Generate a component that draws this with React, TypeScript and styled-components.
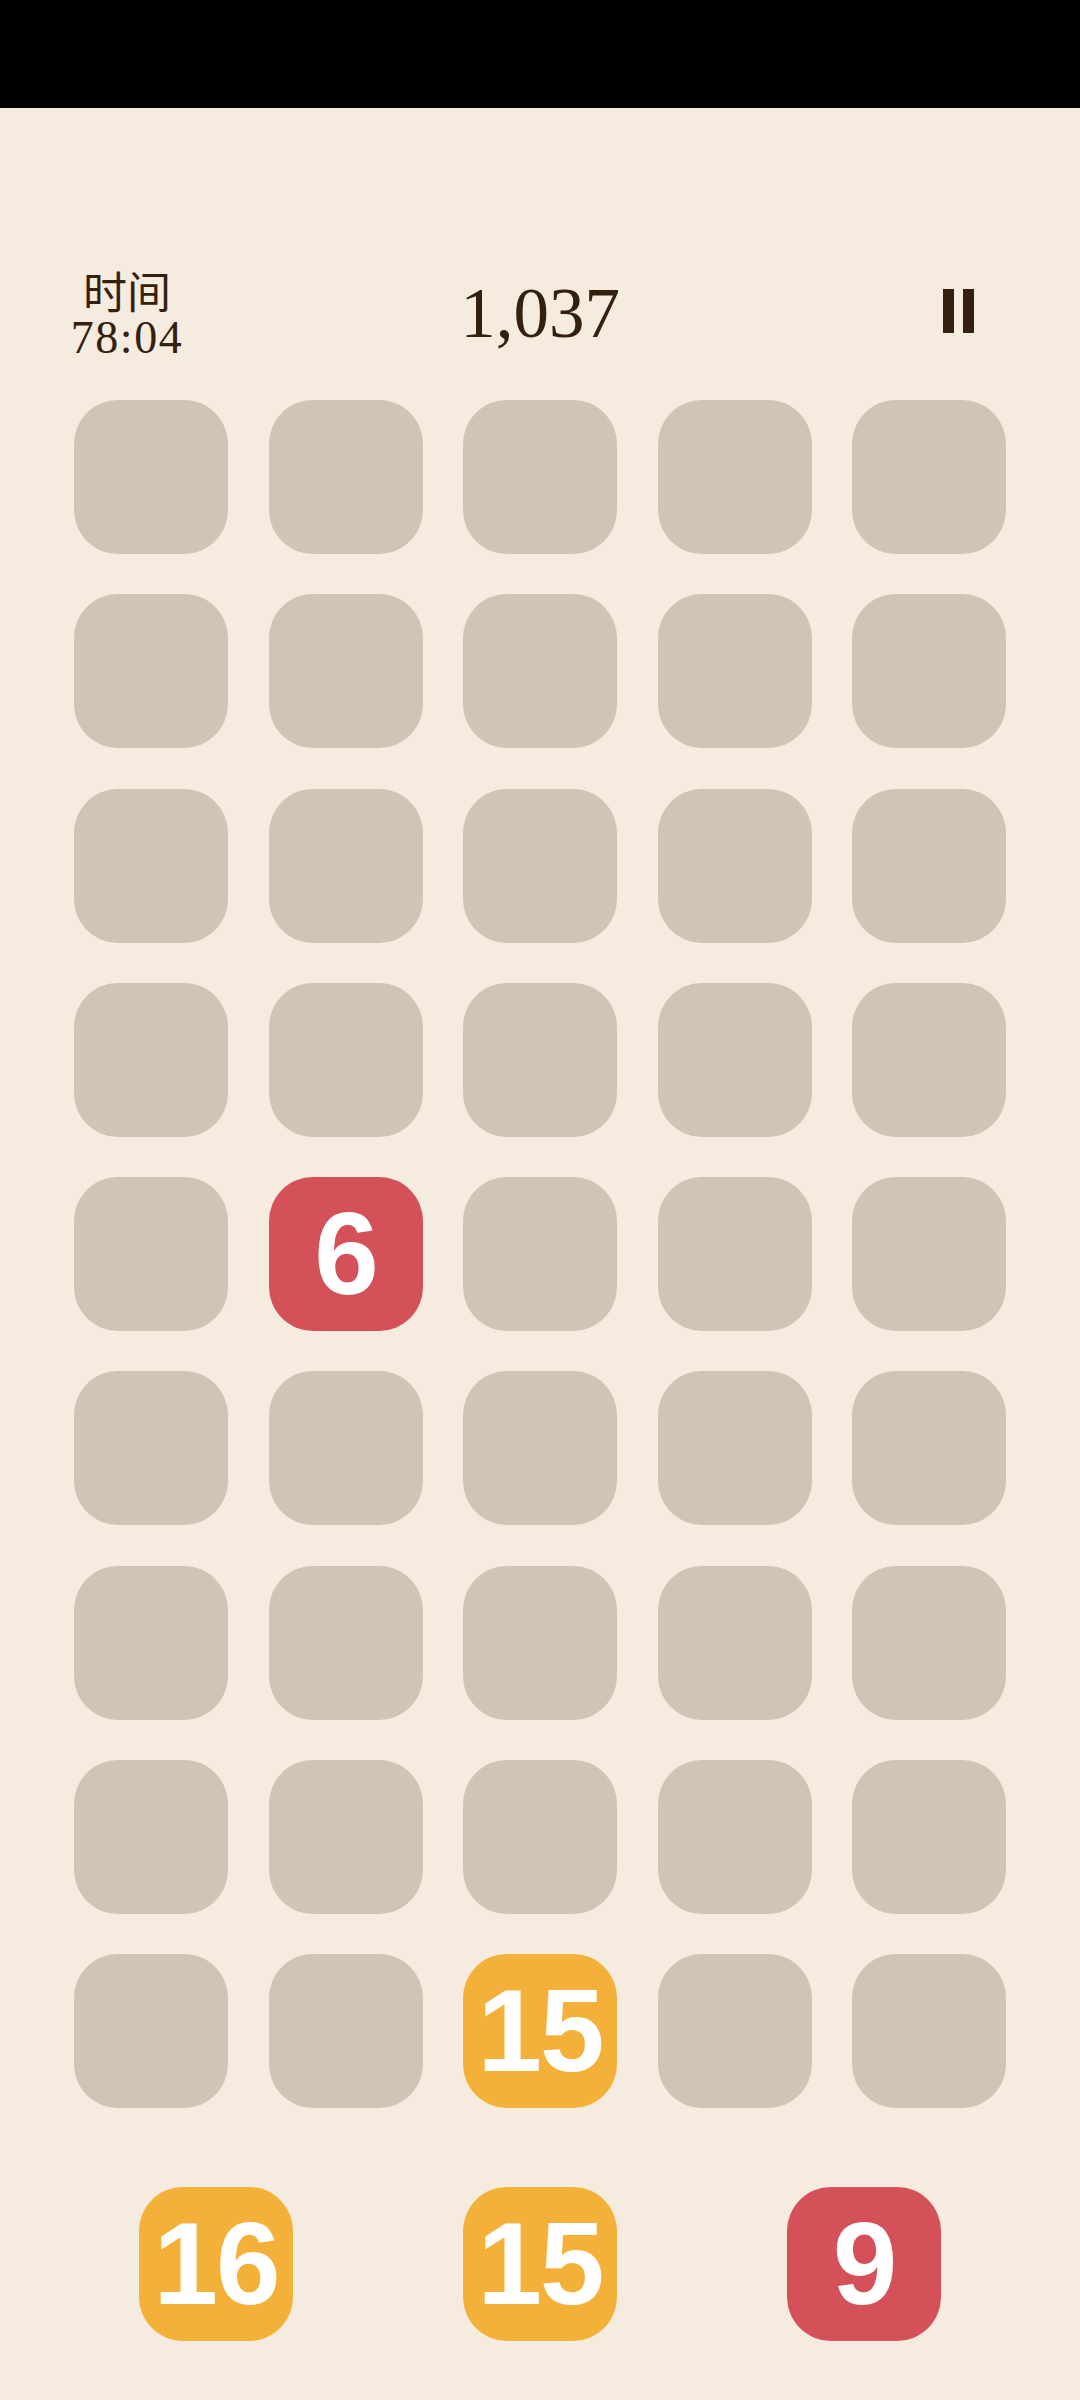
import React from 'react';
import styled, { createGlobalStyle } from 'styled-components';

type TileColor = 'empty' | 'red' | 'orange';

interface Cell {
  value?: number;
  color: TileColor;
}

const COLORS: Record<TileColor, string> = {
  empty: '#d1c3b5',
  red: '#d4515a',
  orange: '#f4b13a',
};

const ROWS = 9;
const COLS = 5;

const filled: Record<string, Cell> = {
  '4-1': { value: 6, color: 'red' },
  '8-2': { value: 15, color: 'orange' },
};

const board: Cell[] = Array.from({ length: ROWS * COLS }, (_, i) => {
  const key = `${Math.floor(i / COLS)}-${i % COLS}`;
  return filled[key] ?? { color: 'empty' };
});

const queue: Cell[] = [
  { value: 16, color: 'orange' },
  { value: 15, color: 'orange' },
  { value: 9, color: 'red' },
];

const GlobalStyle = createGlobalStyle`
  html, body {
    margin: 0;
    padding: 0;
    background: #f5ebde;
  }
`;

export default function App() {
  return (
    <>
      <GlobalStyle />
      <Page>
        <StatusBar />
        <Header>
          <TimeBlock>
            <TimeLabel>时间</TimeLabel>
            <TimeValue>78:04</TimeValue>
          </TimeBlock>
          <Score>1,037</Score>
          <PauseButton aria-label="暂停">
            <PauseBar />
            <PauseBar />
          </PauseButton>
        </Header>

        <Board>
          {board.map((cell, i) => (
            <Tile key={i} $color={cell.color}>
              {cell.value}
            </Tile>
          ))}
        </Board>

        <Queue>
          {queue.map((cell, i) => (
            <Tile key={i} $color={cell.color}>
              {cell.value}
            </Tile>
          ))}
        </Queue>
      </Page>
    </>
  );
}

const Page = styled.div`
  width: 1080px;
  height: 2400px;
  background: #f5ebde;
  display: flex;
  flex-direction: column;
  align-items: center;
  color: #33200f;
`;

const StatusBar = styled.div`
  width: 100%;
  height: 108px;
  background: #000;
  flex-shrink: 0;
`;

const Header = styled.header`
  width: 100%;
  box-sizing: border-box;
  height: 120px;
  margin-top: 145px;
  padding: 0 70px;
  display: grid;
  grid-template-columns: 1fr auto 1fr;
  align-items: center;
`;

const TimeBlock = styled.div`
  justify-self: start;
  width: 114px;
  display: flex;
  flex-direction: column;
  align-items: center;
`;

const TimeLabel = styled.div`
  font-family: 'Noto Sans CJK SC', sans-serif;
  font-size: 44px;
  line-height: 49px;
`;

const TimeValue = styled.div`
  font-family: 'Liberation Serif', serif;
  font-size: 46px;
  line-height: 46px;
  letter-spacing: 1.5px;
`;

const Score = styled.div`
  font-family: 'Liberation Serif', serif;
  font-size: 71px;
  line-height: 1;
`;

const PauseButton = styled.div`
  justify-self: end;
  margin-right: 36px;
  margin-bottom: 4px;
  display: flex;
  gap: 9px;
`;

const PauseBar = styled.span`
  width: 11px;
  height: 44px;
  background: #33200f;
`;

const Board = styled.div`
  margin-top: 27px;
  display: grid;
  grid-template-columns: repeat(5, 154px);
  grid-auto-rows: 154px;
  column-gap: 40.5px;
  row-gap: 40.25px;
`;

const Queue = styled.div`
  margin-top: 79px;
  display: flex;
  justify-content: center;
  gap: 170px;
`;

const Tile = styled.div<{ $color: TileColor }>`
  width: 154px;
  height: 154px;
  border-radius: 44px;
  background: ${({ $color }) => COLORS[$color]};
  display: flex;
  align-items: center;
  justify-content: center;
  color: #fff;
  font-family: 'Liberation Sans', Arial, sans-serif;
  font-weight: 700;
  font-size: 116px;
  line-height: 1;
  letter-spacing: -2px;
`;
